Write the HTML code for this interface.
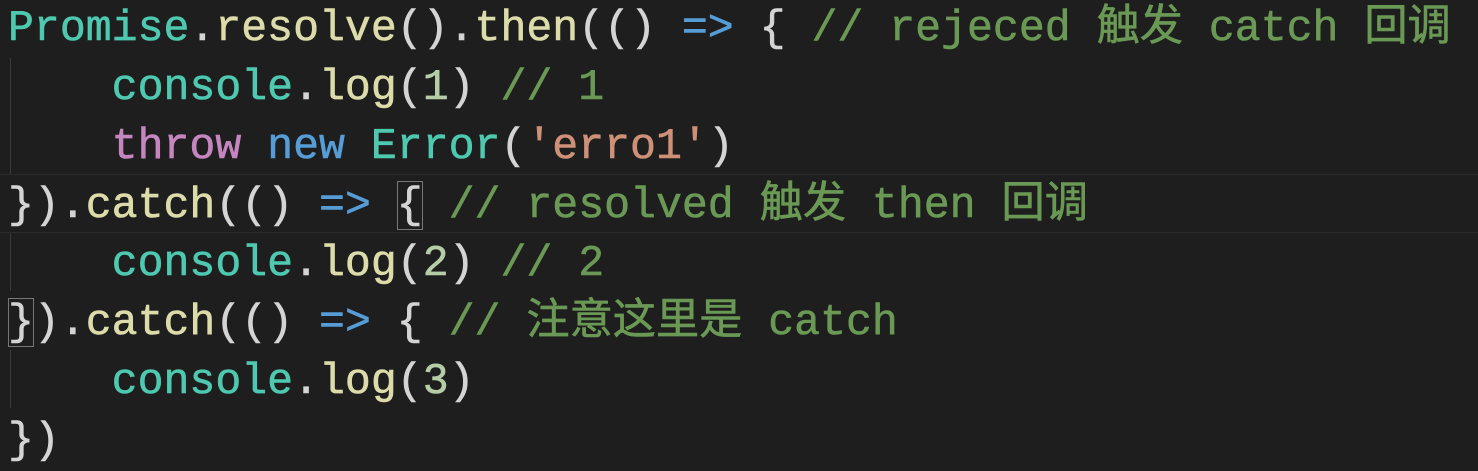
<!DOCTYPE html>
<html><head><meta charset="utf-8"><style>
html,body{margin:0;padding:0;background:#1e1e1e;width:1478px;height:466px;overflow:hidden}
.c{position:absolute;left:8px;top:0px;font-family:"Liberation Mono","Noto Sans CJK SC",monospace;font-size:43.2px;color:#d4d4d4;-webkit-text-stroke:0.6px currentColor}
.l{height:58.85px;line-height:58.85px;white-space:pre}
.cur{position:absolute;left:0;top:174px;width:1478px;height:57px;border-top:1px solid #2a2a2a;border-bottom:1px solid #2a2a2a;background:#1e1e1e}
.g{position:absolute;left:10px;width:1px;background:#3a3a3a}
.t{color:#4ec9b0}.f{color:#dcdcaa}.k{color:#c586c0}.b{color:#569cd6}.m{color:#6a9955}.s{color:#ce9178}.n{color:#b5cea8}
.bx{outline:1.5px solid #777;outline-offset:-1px}
</style></head><body>
<div class="cur"></div>
<div class="g" style="top:58px;height:116px"></div>
<div class="g" style="top:233px;height:58px"></div>
<div class="g" style="top:350px;height:58px"></div>
<div class="c"><div class="l"><span class="t">Promise</span>.<span class="f">resolve</span>().<span class="f">then</span>(() <span class="b">=&gt;</span> { <span class="m">// rejeced 触发 catch 回调</span></div><div class="l">    <span class="t">console</span>.<span class="f">log</span>(<span class="n">1</span>) <span class="m">// 1</span></div><div class="l">    <span class="k">throw</span> <span class="b">new</span> <span class="t">Error</span>(<span class="s">'erro1'</span>)</div><div class="l">}).<span class="f">catch</span>(() <span class="b">=&gt;</span> <span class="bx">{</span> <span class="m">// resolved 触发 then 回调</span></div><div class="l">    <span class="t">console</span>.<span class="f">log</span>(<span class="n">2</span>) <span class="m">// 2</span></div><div class="l"><span class="bx">}</span>).<span class="f">catch</span>(() <span class="b">=&gt;</span> { <span class="m">// 注意这里是 catch</span></div><div class="l">    <span class="t">console</span>.<span class="f">log</span>(<span class="n">3</span>)</div><div class="l">})</div></div>
</body></html>
